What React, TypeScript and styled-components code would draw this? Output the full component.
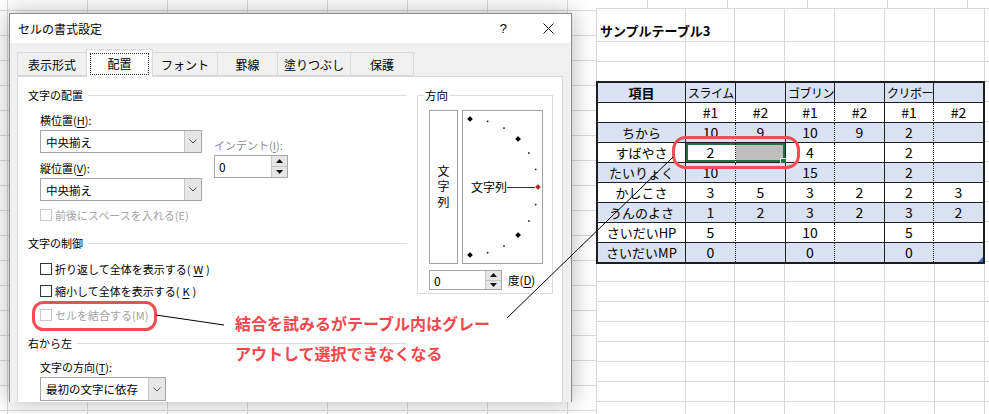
import styled, { createGlobalStyle } from "styled-components";

const UI_FONT = `"Noto Sans CJK JP", "Noto Sans", "Liberation Sans", sans-serif`;
const GRID = "#d9d9d9";
const INK = "#1e1e1e";
const GREEN = "#217346";
const RED = "#ef4f52";

const GlobalStyle = createGlobalStyle`
  html, body { margin: 0; padding: 0; background: #fff; }
  body { font-family: ${UI_FONT}; color: #000; }
  * { box-sizing: border-box; }
`;

// sheet column edges, relative to the left of the right-hand sheet
const colEdges = [0, 89, 138, 188, 238, 288, 338, 388];
const colLines = colEdges
  .map((x) => `linear-gradient(${GRID}, ${GRID}) ${x}px 0 / 1px 100% no-repeat`)
  .join(", ");

const Page = styled.div`
  position: relative;
  width: 989px;
  height: 414px;
  overflow: hidden;
  display: grid;
  grid-template-columns: 596px 1fr;
  background: #fff;
`;

const BackSheet = styled.div`
  background:
    repeating-linear-gradient(90deg, transparent 0 7px, ${GRID} 7px 8px, transparent 8px 80px),
    repeating-linear-gradient(180deg, transparent 0 10px, ${GRID} 10px 11px, transparent 11px 25px);
`;

const RightSheet = styled.div`
  display: flex;
  flex-direction: column;
`;

const TopStrip = styled.div`
  height: 9px;
  flex-shrink: 0;
  border-bottom: 1px solid ${GRID};
  background: repeating-linear-gradient(90deg, transparent 0 51px, ${GRID} 51px 52px, transparent 52px 80px);
`;

const SheetBody = styled.div`
  flex: 1;
  display: flex;
  flex-direction: column;
  background: ${colLines};
`;

const TitleRow = styled.div`
  height: 33px;
  flex-shrink: 0;
  border-bottom: 1px solid ${GRID};
  display: flex;
  align-items: flex-end;
  padding: 0 0 1px 4px;
  font-weight: 700;
  font-size: 13px;
  line-height: 18px;
`;

const GridArea = styled.div`
  flex: 1;
  padding-top: 39px;
  background: repeating-linear-gradient(180deg, transparent 0 19px, ${GRID} 19px 20px);
`;

const Table = styled.div`
  position: relative;
  display: grid;
  grid-template-columns: 88px 50px 50px 49px 50px 49px 49px;
  width: max-content;
  border: 2px solid ${INK};
  &::after {
    content: "";
    position: absolute;
    right: 0;
    bottom: 0;
    border-style: solid;
    border-width: 0 0 5px 5px;
    border-color: transparent transparent #3c6cc4 transparent;
  }
`;

type Edge = "solid" | "dotted" | "none";
type Kind = "head" | "group" | "label" | "num";

const Cell = styled.div<{ $blue: boolean; $edge: Edge; $last: boolean; $kind: Kind; $sel?: "start" | "end" }>`
  position: relative;
  height: ${(p) => (p.$last ? 19 : 20)}px;
  border-bottom: ${(p) => (p.$last ? "none" : `1px solid ${INK}`)};
  border-right: ${(p) => (p.$edge === "none" ? "none" : `1px ${p.$edge} ${INK}`)};
  background: ${(p) => (p.$sel === "end" ? "#bfbfbf" : p.$blue ? "#d9e1f2" : "#fff")};
  font-size: ${(p) => (p.$kind === "num" ? 14 : p.$kind === "group" ? 12 : 13)}px;
  letter-spacing: ${(p) => (p.$kind === "group" ? "-0.5px" : "0")};
  font-weight: ${(p) => (p.$kind === "head" ? 700 : 400)};
  text-align: ${(p) => (p.$kind === "group" ? "left" : "center")};
  padding-left: ${(p) => (p.$kind === "group" ? 2 : 0)}px;
  line-height: 19px;
  white-space: nowrap;
  box-shadow: ${(p) =>
    p.$sel === "start"
      ? `inset 2px 2px 0 ${GREEN}, inset 0 -2px 0 ${GREEN}`
      : p.$sel === "end"
      ? `inset -2px 2px 0 ${GREEN}, inset 0 -2px 0 ${GREEN}`
      : "none"};
  &::after {
    content: "";
    display: ${(p) => (p.$sel === "end" ? "block" : "none")};
    position: absolute;
    right: -3px;
    bottom: -4px;
    width: 6px;
    height: 6px;
    background: ${GREEN};
    border: 1px solid #fff;
  }
`;

const groups = ["スライム", "ゴブリン", "クリボー"];
const stats: [string, string[]][] = [
  ["ちから", ["10", "9", "10", "9", "2", ""]],
  ["すばやさ", ["2", "", "4", "", "2", ""]],
  ["たいりょく", ["10", "", "15", "", "2", ""]],
  ["かしこさ", ["3", "5", "3", "2", "2", "3"]],
  ["うんのよさ", ["1", "2", "3", "2", "3", "2"]],
  ["さいだいHP", ["5", "", "10", "", "5", ""]],
  ["さいだいMP", ["0", "", "0", "", "0", ""]],
];

const edgeFor = (row: number, col: number): Edge => {
  if (col === 6) return "none";
  if (col % 2 === 0) return "solid";
  return row === 0 ? "solid" : "dotted";
};

const SampleTable = () => {
  const rows: { text: string; kind: Kind }[][] = [
    [
      { text: "項目", kind: "head" },
      ...groups.flatMap((g) => [
        { text: g, kind: "group" as Kind },
        { text: "", kind: "group" as Kind },
      ]),
    ],
    [{ text: "", kind: "label" }, ...groups.flatMap(() => [{ text: "#1", kind: "num" as Kind }, { text: "#2", kind: "num" as Kind }])],
    ...stats.map(([label, vals]) => [{ text: label, kind: "label" as Kind }, ...vals.map((v) => ({ text: v, kind: "num" as Kind }))]),
  ];
  return (
    <Table>
      {rows.map((row, r) =>
        row.map((c, ci) => (
          <Cell
            key={`${r}-${ci}`}
            $blue={r % 2 === 0}
            $edge={edgeFor(r, ci)}
            $last={r === rows.length - 1}
            $kind={c.kind}
            $sel={r === 3 && ci === 1 ? "start" : r === 3 && ci === 2 ? "end" : undefined}
          >
            {c.text}
          </Cell>
        ))
      )}
    </Table>
  );
};

/* ---------- dialog ---------- */

const Dialog = styled.div`
  position: absolute;
  left: 9px;
  top: 13px;
  width: 563px;
  height: 389px;
  display: flex;
  flex-direction: column;
  background: #f0f0f0;
  border: 1px solid #8a8a8a;
  border-bottom: none;
  box-shadow: 0 0 22px rgba(0, 0, 0, 0.3);
  overflow: hidden;
  font-size: 11px;
  color: #000;
`;

const TitleBar = styled.div`
  height: 29px;
  flex-shrink: 0;
  background: #fff;
  display: flex;
  align-items: center;
  padding: 0 17px 0 8px;
  font-size: 12px;
`;

const TitleText = styled.span`
  flex: 1;
`;

const HelpGlyph = styled.span`
  font-family: "Liberation Sans", sans-serif;
  font-size: 13px;
  margin-right: 36px;
`;

const DialogBody = styled.div`
  flex: 1;
  display: flex;
  flex-direction: column;
  padding: 0 8px 0 7px;
`;

const TabBar = styled.div`
  height: 33px;
  flex-shrink: 0;
  display: flex;
  align-items: flex-end;
`;

const Tab = styled.div<{ $w: number; $active?: boolean }>`
  position: relative;
  z-index: ${(p) => (p.$active ? 1 : 0)};
  width: ${(p) => p.$w}px;
  height: ${(p) => (p.$active ? 28 : 24)}px;
  margin-left: -1px;
  margin-bottom: ${(p) => (p.$active ? -1 : 0)}px;
  border: 1px solid #d9d9d9;
  border-bottom: ${(p) => (p.$active ? "none" : "1px solid #d9d9d9")};
  background: ${(p) => (p.$active ? "#fff" : "#f0f0f0")};
  display: flex;
  align-items: center;
  justify-content: center;
  font-size: 12px;
  &:first-child {
    margin-left: 0;
  }
`;

const FocusLabel = styled.span`
  width: calc(100% - 6px);
  height: 22px;
  border: 1px dotted #333;
  display: flex;
  align-items: center;
  justify-content: center;
`;

const Panel = styled.div`
  flex: 1;
  background: #fff;
  border: 1px solid #d9d9d9;
  border-bottom: none;
  display: grid;
  grid-template-columns: 379px 136px;
  column-gap: 10px;
  align-items: start;
  padding: 8px 9px 0 10px;
`;

const Column = styled.div`
  display: flex;
  flex-direction: column;
`;

const SectionHead = styled.div<{ $mt?: number }>`
  height: 20px;
  margin-top: ${(p) => p.$mt ?? 0}px;
  display: flex;
  align-items: center;
  gap: 5px;
  white-space: nowrap;
  &::after {
    content: "";
    flex: 1;
    height: 1px;
    background: #dcdcdc;
  }
`;

const AlignBlock = styled.div`
  display: flex;
  gap: 12px;
  margin: 5px 0 0 12px;
`;

const AlignMain = styled.div`
  display: flex;
  flex-direction: column;
  width: 162px;
`;

const IndentSide = styled.div`
  display: flex;
  flex-direction: column;
  padding-top: 25px;
`;

const Indented = styled.div<{ $mt?: number }>`
  display: flex;
  flex-direction: column;
  margin: ${(p) => p.$mt ?? 0}px 0 0 12px;
`;

const FieldLabel = styled.div<{ $mt?: number; $muted?: boolean }>`
  height: 20px;
  line-height: 20px;
  margin-top: ${(p) => p.$mt ?? 0}px;
  color: ${(p) => (p.$muted ? "#8c8c8c" : "#000")};
  white-space: nowrap;
`;

const Key = styled.span`
  text-decoration: underline;
  text-underline-offset: 2px;
`;

const SelectBox = styled.div<{ $w: number; $h?: number }>`
  width: ${(p) => p.$w}px;
  height: ${(p) => p.$h ?? 23}px;
  border: 1px solid #a6a6a6;
  background: #fff;
  display: flex;
  font-size: 11.5px;
`;

const SelectValue = styled.span`
  flex: 1;
  display: flex;
  align-items: center;
  padding-left: 5px;
  white-space: nowrap;
`;

const SelectButton = styled.span`
  width: 17px;
  border-left: 1px solid #c6c6c6;
  background: #e6e6e6;
  display: flex;
  align-items: center;
  justify-content: center;
`;

const SpinBox = styled.div<{ $w: number; $h: number }>`
  width: ${(p) => p.$w}px;
  height: ${(p) => p.$h}px;
  border: 1px solid #a6a6a6;
  background: #fff;
  display: flex;
`;

const SpinValue = styled.span`
  flex: 1;
  display: flex;
  align-items: center;
  padding-left: 4px;
  font-size: 12px;
`;

const SpinButtons = styled.span`
  width: 16px;
  display: flex;
  flex-direction: column;
  border-left: 1px solid #c6c6c6;
`;

const SpinHalf = styled.span`
  flex: 1;
  background: #e6e6e6;
  display: flex;
  align-items: center;
  justify-content: center;
  & + & {
    border-top: 1px solid #c6c6c6;
  }
`;

const CheckRow = styled.div<{ $mt?: number; $disabled?: boolean }>`
  height: 20px;
  margin: ${(p) => p.$mt ?? 0}px 0 0 12px;
  display: flex;
  align-items: center;
  gap: 3px;
  white-space: nowrap;
  color: ${(p) => (p.$disabled ? "#a3a3a3" : "#000")};
`;

const CheckBox = styled.span<{ $disabled?: boolean }>`
  width: 12px;
  height: 12px;
  flex-shrink: 0;
  border: 1px solid ${(p) => (p.$disabled ? "#c8c8c8" : "#333")};
  background: #fff;
`;

const Group = styled.fieldset`
  margin: 0;
  min-width: 0;
  border: 1px solid #dcdcdc;
  padding: 5px 9px 3px 11px;
`;

const GroupLegend = styled.legend`
  padding: 0 1px;
  margin-left: -5px;
  height: 20px;
  line-height: 20px;
  font-size: 11.5px;
`;

const DirRow = styled.div`
  display: flex;
  gap: 4px;
`;

const VerticalBox = styled.div`
  width: 29px;
  height: 154px;
  border: 1px solid #a0a0a0;
  background: #fff;
  display: flex;
  align-items: center;
  justify-content: center;
`;

const VerticalText = styled.span`
  writing-mode: vertical-rl;
  text-orientation: upright;
  font-size: 12px;
  letter-spacing: 3.5px;
  margin-top: 3px;
`;

const GaugeBox = styled.div`
  width: 81px;
  height: 154px;
  border: 1px solid #a0a0a0;
  background: #fff;
  & svg {
    display: block;
  }
`;

const DegreeRow = styled.div`
  display: flex;
  align-items: center;
  gap: 6px;
  margin-top: 6px;
  white-space: nowrap;
  font-size: 11.5px;
`;

const Chevron = () => (
  <svg width="8" height="5" viewBox="0 0 8 5">
    <polyline points="0.5,0.5 4,4 7.5,0.5" fill="none" stroke="#555" strokeWidth="1" />
  </svg>
);

const Arrow = ({ up }: { up?: boolean }) => (
  <svg width="7" height="4" viewBox="0 0 7 4">
    <polygon points={up ? "0,4 3.5,0 7,4" : "0,0 3.5,4 7,0"} fill="#111" />
  </svg>
);

const Select = ({ w, h, value }: { w: number; h?: number; value: string }) => (
  <SelectBox $w={w} $h={h}>
    <SelectValue>{value}</SelectValue>
    <SelectButton>
      <Chevron />
    </SelectButton>
  </SelectBox>
);

const Spin = ({ w, h }: { w: number; h: number }) => (
  <SpinBox $w={w} $h={h}>
    <SpinValue>0</SpinValue>
    <SpinButtons>
      <SpinHalf>
        <Arrow up />
      </SpinHalf>
      <SpinHalf>
        <Arrow />
      </SpinHalf>
    </SpinButtons>
  </SpinBox>
);

const Gauge = () => {
  const cx = 7;
  const cy = 76;
  const r = 68;
  const angles = Array.from({ length: 13 }, (_, i) => 90 - i * 15);
  return (
    <svg width="79" height="152" viewBox="0 0 79 152">
      {angles.map((a) => {
        const rad = (a * Math.PI) / 180;
        const x = cx + r * Math.cos(rad);
        const y = cy - r * Math.sin(rad);
        if (a % 45 === 0) {
          return (
            <rect
              key={a}
              x={x - 2}
              y={y - 2}
              width={4}
              height={4}
              fill={a === 0 ? "#b3261e" : "#000"}
              transform={`rotate(45 ${x} ${y})`}
            />
          );
        }
        return <rect key={a} x={x - 0.8} y={y - 0.8} width={1.6} height={1.6} fill="#222" />;
      })}
      <text x="8" y="80.5" fontSize="12" fontFamily={UI_FONT} fill="#000">
        文字列
      </text>
      <line x1="44" y1="76.5" x2="72" y2="76.5" stroke="#333" strokeWidth="1" />
    </svg>
  );
};

const CloseIcon = () => (
  <svg width="11" height="11" viewBox="0 0 11 11">
    <path d="M0.5 0.5 L10.5 10.5 M10.5 0.5 L0.5 10.5" stroke="#111" strokeWidth="1" />
  </svg>
);

const tabs = [
  { label: "表示形式", w: 70 },
  { label: "配置", w: 67, active: true },
  { label: "フォント", w: 66 },
  { label: "罫線", w: 61 },
  { label: "塗りつぶし", w: 74 },
  { label: "保護", w: 64 },
];

const FormatDialog = () => (
  <Dialog>
    <TitleBar>
      <TitleText>セルの書式設定</TitleText>
      <HelpGlyph>?</HelpGlyph>
      <CloseIcon />
    </TitleBar>
    <DialogBody>
      <TabBar>
        {tabs.map((t) => (
          <Tab key={t.label} $w={t.w} $active={t.active}>
            {t.active ? <FocusLabel>{t.label}</FocusLabel> : t.label}
          </Tab>
        ))}
      </TabBar>
      <Panel>
        <Column>
          <SectionHead>文字の配置</SectionHead>
          <AlignBlock>
            <AlignMain>
              <FieldLabel>
                横位置(<Key>H</Key>):
              </FieldLabel>
              <Select w={162} value="中央揃え" />
              <FieldLabel $mt={5}>
                縦位置(<Key>V</Key>):
              </FieldLabel>
              <Select w={162} value="中央揃え" />
            </AlignMain>
            <IndentSide>
              <FieldLabel $muted>
                インデント(<Key>I</Key>):
              </FieldLabel>
              <Spin w={74} h={23} />
            </IndentSide>
          </AlignBlock>
          <CheckRow $mt={4} $disabled>
            <CheckBox $disabled />
            前後にスペースを入れる(E)
          </CheckRow>
          <SectionHead $mt={8}>文字の制御</SectionHead>
          <CheckRow $mt={6}>
            <CheckBox />
            折り返して全体を表示する(<Key>W</Key>)
          </CheckRow>
          <CheckRow $mt={2}>
            <CheckBox />
            縮小して全体を表示する(<Key>K</Key>)
          </CheckRow>
          <CheckRow $mt={4} $disabled>
            <CheckBox $disabled />
            セルを結合する(M)
          </CheckRow>
          <SectionHead $mt={8}>右から左</SectionHead>
          <Indented $mt={4}>
            <FieldLabel>
              文字の方向(<Key>T</Key>):
            </FieldLabel>
            <Select w={126} h={24} value="最初の文字に依存" />
          </Indented>
        </Column>
        <Group>
          <GroupLegend>方向</GroupLegend>
          <DirRow>
            <VerticalBox>
              <VerticalText>文字列</VerticalText>
            </VerticalBox>
            <GaugeBox>
              <Gauge />
            </GaugeBox>
          </DirRow>
          <DegreeRow>
            <Spin w={73} h={20} />
            <span>
              度(<Key>D</Key>)
            </span>
          </DegreeRow>
        </Group>
      </Panel>
    </DialogBody>
  </Dialog>
);

/* ---------- annotation ---------- */

const Overlay = styled.svg`
  position: absolute;
  left: 0;
  top: 0;
  pointer-events: none;
`;

const Callout = styled.div`
  position: absolute;
  left: 235px;
  top: 308px;
  font-size: 16px;
  line-height: 30px;
  font-weight: 700;
  color: #f2474b;
  white-space: nowrap;
`;

const Annotation = () => (
  <>
    <Overlay width="989" height="414" viewBox="0 0 989 414">
      <rect x="33.5" y="302.5" width="122" height="27" rx="10" fill="none" stroke={RED} strokeWidth="3" />
      <rect x="673.5" y="137.5" width="125" height="30" rx="12" fill="none" stroke={RED} strokeWidth="3" />
      <line x1="156" y1="315" x2="224" y2="325" stroke="#000" strokeWidth="1" />
      <line x1="507" y1="318" x2="673" y2="157" stroke="#000" strokeWidth="1" />
    </Overlay>
    <Callout>
      結合を試みるがテーブル内はグレー
      <br />
      アウトして選択できなくなる
    </Callout>
  </>
);

export default function App() {
  return (
    <>
      <GlobalStyle />
      <Page>
        <BackSheet />
        <RightSheet>
          <TopStrip />
          <SheetBody>
            <TitleRow>サンプルテーブル3</TitleRow>
            <GridArea>
              <SampleTable />
            </GridArea>
          </SheetBody>
        </RightSheet>
        <FormatDialog />
        <Annotation />
      </Page>
    </>
  );
}
